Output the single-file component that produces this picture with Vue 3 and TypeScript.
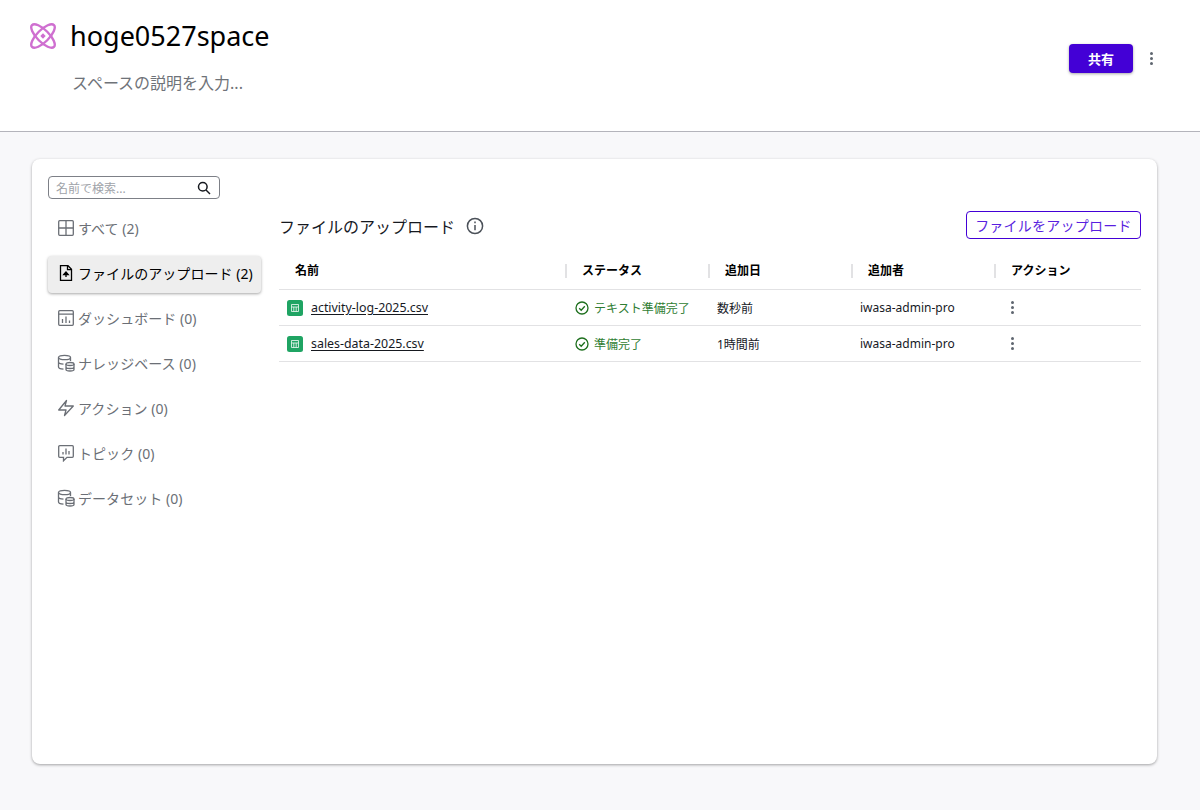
<script setup lang="ts">
interface NavItem {
  icon: string
  label: string
  active?: boolean
}

interface FileRow {
  name: string
  status: string
  added: string
  by: string
}

const navItems: NavItem[] = [
  { icon: 'grid', label: 'すべて (2)' },
  { icon: 'upload', label: 'ファイルのアップロード (2)', active: true },
  { icon: 'dash', label: 'ダッシュボード (0)' },
  { icon: 'db', label: 'ナレッジベース (0)' },
  { icon: 'bolt', label: 'アクション (0)' },
  { icon: 'topic', label: 'トピック (0)' },
  { icon: 'db', label: 'データセット (0)' },
]

const columns = ['名前', 'ステータス', '追加日', '追加者', 'アクション']

const files: FileRow[] = [
  { name: 'activity-log-2025.csv', status: 'テキスト準備完了', added: '数秒前', by: 'iwasa-admin-pro' },
  { name: 'sales-data-2025.csv', status: '準備完了', added: '1時間前', by: 'iwasa-admin-pro' },
]
</script>

<template>
  <div class="page">
    <header class="top">
      <div class="top-left">
        <div class="title-row">
          <svg class="logo" width="28" height="28" viewBox="0 0 28 28" fill="none" stroke="#cf6fd0" stroke-width="2.400">
            <ellipse cx="14" cy="14" rx="15.500" ry="6" transform="rotate(45 14 14)" />
            <ellipse cx="14" cy="14" rx="15.500" ry="6" transform="rotate(-45 14 14)" />
            <path d="M14 11.300l2.700 2.700-2.700 2.700-2.700-2.700z" fill="#cf6fd0" stroke="none" />
          </svg>
          <h1 class="title">hoge0527space</h1>
        </div>
        <p class="desc">スペースの説明を入力...</p>
      </div>
      <div class="top-right">
        <button class="share">共有</button>
        <span class="kebab"><i></i><i></i><i></i></span>
      </div>
    </header>

    <main class="body">
      <section class="card">
        <div class="search">
          <span class="search-text">名前で検索...</span>
          <svg width="14" height="14" viewBox="0 0 14 14" fill="none" stroke="#16191f" stroke-width="1.500">
            <circle cx="5.800" cy="5.800" r="4.300" />
            <path d="M9 9l4 4" />
          </svg>
        </div>

        <div class="columns">
          <nav class="side">
            <div v-for="item in navItems" :key="item.label" class="nav-item" :class="{ active: item.active }">
              <svg class="nav-icon" width="18" height="18" viewBox="0 0 18 18" fill="none" stroke="currentColor" stroke-width="1.300">
                <template v-if="item.icon === 'grid'">
                  <rect x="1.700" y="1.700" width="14.600" height="14.600" rx="1" />
                  <path d="M9 1.700v14.600M1.700 9h14.600" />
                </template>
                <template v-else-if="item.icon === 'upload'">
                  <path d="M3.500 1.700h7.500l3.500 3.500v11.100h-11z" />
                  <path d="M10.500 1.700v4h4" />
                  <path d="M9 13V8.500M6.800 10.500L9 8l2.200 2.500z" fill="currentColor" />
                </template>
                <template v-else-if="item.icon === 'dash'">
                  <rect x="1.700" y="1.700" width="14.600" height="14.600" rx="1" />
                  <path d="M1.700 5.200h14.600M5.500 14v-4M9 14V7.500M12.500 14v-2.500" />
                </template>
                <template v-else-if="item.icon === 'db'">
                  <ellipse cx="7.500" cy="3.500" rx="6" ry="2.200" />
                  <path d="M1.500 3.500v9.500c0 1.200 2.500 2 5 2.200M1.500 8c0 1.200 2.500 2 5 2.200M13.500 3.500V7" />
                  <ellipse cx="13" cy="10" rx="4" ry="1.500" />
                  <path d="M9 10v5.500c0 .8 1.800 1.500 4 1.500s4-.7 4-1.500V10M9 13c0 .8 1.800 1.500 4 1.500s4-.7 4-1.500" />
                </template>
                <template v-else-if="item.icon === 'bolt'">
                  <path d="M9.500 1.500L8 7h8.300L7.500 16.500 9 11H1.700z" stroke-linejoin="round" />
                </template>
                <template v-else>
                  <path d="M2.700 1.700h12.600a1 1 0 0 1 1 1v9.600a1 1 0 0 1-1 1H10L6.500 16.800v-3.500H2.700a1 1 0 0 1-1-1V2.700a1 1 0 0 1 1-1z" />
                  <path d="M6 10.500V8M9 10.500V4.500M12 10.500V7" />
                </template>
              </svg>
              <span>{{ item.label }}</span>
            </div>
          </nav>

          <div class="content">
            <div class="content-head">
              <div class="head-left">
                <h2>ファイルのアップロード</h2>
                <svg width="18" height="18" viewBox="0 0 18 18" fill="none" stroke="#4b5159" stroke-width="1.500">
                  <circle cx="9" cy="9" r="7.600" />
                  <path d="M9 8v5.200" />
                  <path d="M9 4.500v1.800" />
                </svg>
              </div>
              <button class="upload">ファイルをアップロード</button>
            </div>

            <div class="table">
              <div class="row head">
                <div v-for="(col, i) in columns" :key="col" class="th" :class="{ sep: i > 0 }">{{ col }}</div>
              </div>
              <div v-for="file in files" :key="file.name" class="row">
                <div class="td name">
                  <svg width="16" height="16" viewBox="0 0 16 16">
                    <rect width="16" height="16" rx="2.500" fill="#1fa463" />
                    <path d="M4.500 4.500h7v7h-7zM4.500 7h7M6.800 7v4.500M9.200 7v4.500" fill="none" stroke="#fff" stroke-opacity=".75" stroke-width="1" />
                  </svg>
                  <a>{{ file.name }}</a>
                </div>
                <div class="td status">
                  <svg width="14" height="14" viewBox="0 0 14 14" fill="none" stroke="#1d6f1d" stroke-width="1.300">
                    <circle cx="7" cy="7" r="6" />
                    <path d="M4.200 7.200l2 2 3.600-4" />
                  </svg>
                  <span>{{ file.status }}</span>
                </div>
                <div class="td">{{ file.added }}</div>
                <div class="td">{{ file.by }}</div>
                <div class="td">
                  <span class="kebab small"><i></i><i></i><i></i></span>
                </div>
              </div>
            </div>
          </div>
        </div>
      </section>
    </main>
  </div>
</template>

<style>
html,
body {
  margin: 0;
  background: #f8f8fa;
}
</style>

<style scoped>
.page {
  min-height: 810px;
  display: flex;
  flex-direction: column;
  font-family: "Noto Sans", "Noto Sans CJK JP", sans-serif;
  color: #16191f;
  background: #f8f8fa;
}

.top {
  height: 131px;
  box-sizing: content-box;
  background: #fff;
  border-bottom: 1px solid #b4b4bb;
  display: flex;
  justify-content: space-between;
  padding: 0 43px 0 29px;
}

.top-left {
  padding-top: 19px;
}

.title-row {
  display: flex;
  align-items: center;
  gap: 13px;
  height: 34px;
}

.title {
  margin: 0;
  font-size: 27px;
  font-weight: 400;
  line-height: 34px;
  color: #000;
}

.desc {
  margin: 18px 0 0 43px;
  font-size: 16px;
  line-height: 24px;
  color: #6f7379;
}

.top-right {
  display: flex;
  align-items: flex-start;
  gap: 12px;
  padding-top: 44px;
}

.share {
  width: 64px;
  height: 29px;
  border: 0;
  border-radius: 4px;
  background: #4300d6;
  color: #fff;
  font: 600 13px "Noto Sans", "Noto Sans CJK JP", sans-serif;
  box-shadow: 0 1px 3px rgba(0, 0, 0, 0.35);
}

.kebab {
  width: 12px;
  height: 29px;
  display: flex;
  flex-direction: column;
  align-items: center;
  justify-content: center;
  gap: 2.300px;
}

.kebab i {
  width: 3px;
  height: 3px;
  border-radius: 50%;
  background: #5f6670;
}

.kebab.small {
  height: auto;
  margin-left: 3px;
}

.body {
  flex: 1;
  padding: 27px 43px 45px 32px;
}

.card {
  height: 605px;
  box-sizing: border-box;
  background: #fff;
  border-radius: 8px;
  box-shadow: 0 1px 3px rgba(0, 0, 0, 0.35);
  padding: 17px 16px;
}

.search {
  width: 172px;
  height: 23px;
  box-sizing: border-box;
  border: 1px solid #7d8087;
  border-radius: 4px;
  display: flex;
  align-items: center;
  justify-content: space-between;
  padding: 0 8px 0 7px;
}

.search-text {
  font-size: 12px;
  color: #a0a3a9;
}

.columns {
  display: flex;
  gap: 18px;
  margin-top: 12px;
}

.side {
  width: 213px;
  display: flex;
  flex-direction: column;
  gap: 8px;
}

.nav-item {
  height: 37px;
  box-sizing: border-box;
  display: flex;
  align-items: center;
  gap: 3px;
  padding: 0 0 3px 9px;
  border-radius: 4px;
  font-size: 14px;
  letter-spacing: 0.05px;
  color: #6b6f76;
  white-space: nowrap;
}

.nav-item.active {
  background: #eee;
  color: #000;
  box-shadow: 0 1px 3px rgba(0, 0, 0, 0.35);
}

.nav-icon {
  flex: none;
}

.content {
  flex: 1;
  min-width: 0;
}

.content-head {
  height: 28px;
  display: flex;
  align-items: center;
  justify-content: space-between;
}

.head-left {
  display: flex;
  align-items: center;
  gap: 11px;
  padding-top: 2px;
}

.head-left h2 {
  margin: 0;
  font-size: 16px;
  font-weight: 400;
  color: #16191f;
}

.upload {
  width: 175px;
  height: 28px;
  box-sizing: border-box;
  background: #fff;
  border: 1px solid #4300d6;
  border-radius: 4px;
  color: #5a1fe0;
  font: 400 14px "Noto Sans", "Noto Sans CJK JP", sans-serif;
  letter-spacing: 0.25px;
  padding: 0;
}

.table {
  margin-top: 11px;
}

.row {
  display: grid;
  grid-template-columns: 286px 143px 143px 143px 1fr;
  height: 36px;
  border-bottom: 1px solid #e2e2e4;
  box-sizing: border-box;
  align-items: center;
  font-size: 12px;
}

.row.head {
  height: 40px;
  padding-top: 2px;
}

.th {
  padding-left: 16px;
  font-weight: 700;
  font-size: 12px;
  color: #000;
  line-height: 14px;
}

.th.sep {
  border-left: 2px solid #e2e2e4;
  padding-left: 15px;
}

.td {
  padding-left: 9px;
  white-space: nowrap;
}

.name {
  display: flex;
  align-items: center;
  gap: 8px;
  padding-left: 8px;
}

.name a {
  font-size: 12.400px;
  color: #16191f;
  text-decoration: underline;
  text-underline-offset: 2px;
}

.status {
  display: flex;
  align-items: center;
  gap: 5px;
  color: #2f7d32;
  padding-left: 10px;
}
</style>
